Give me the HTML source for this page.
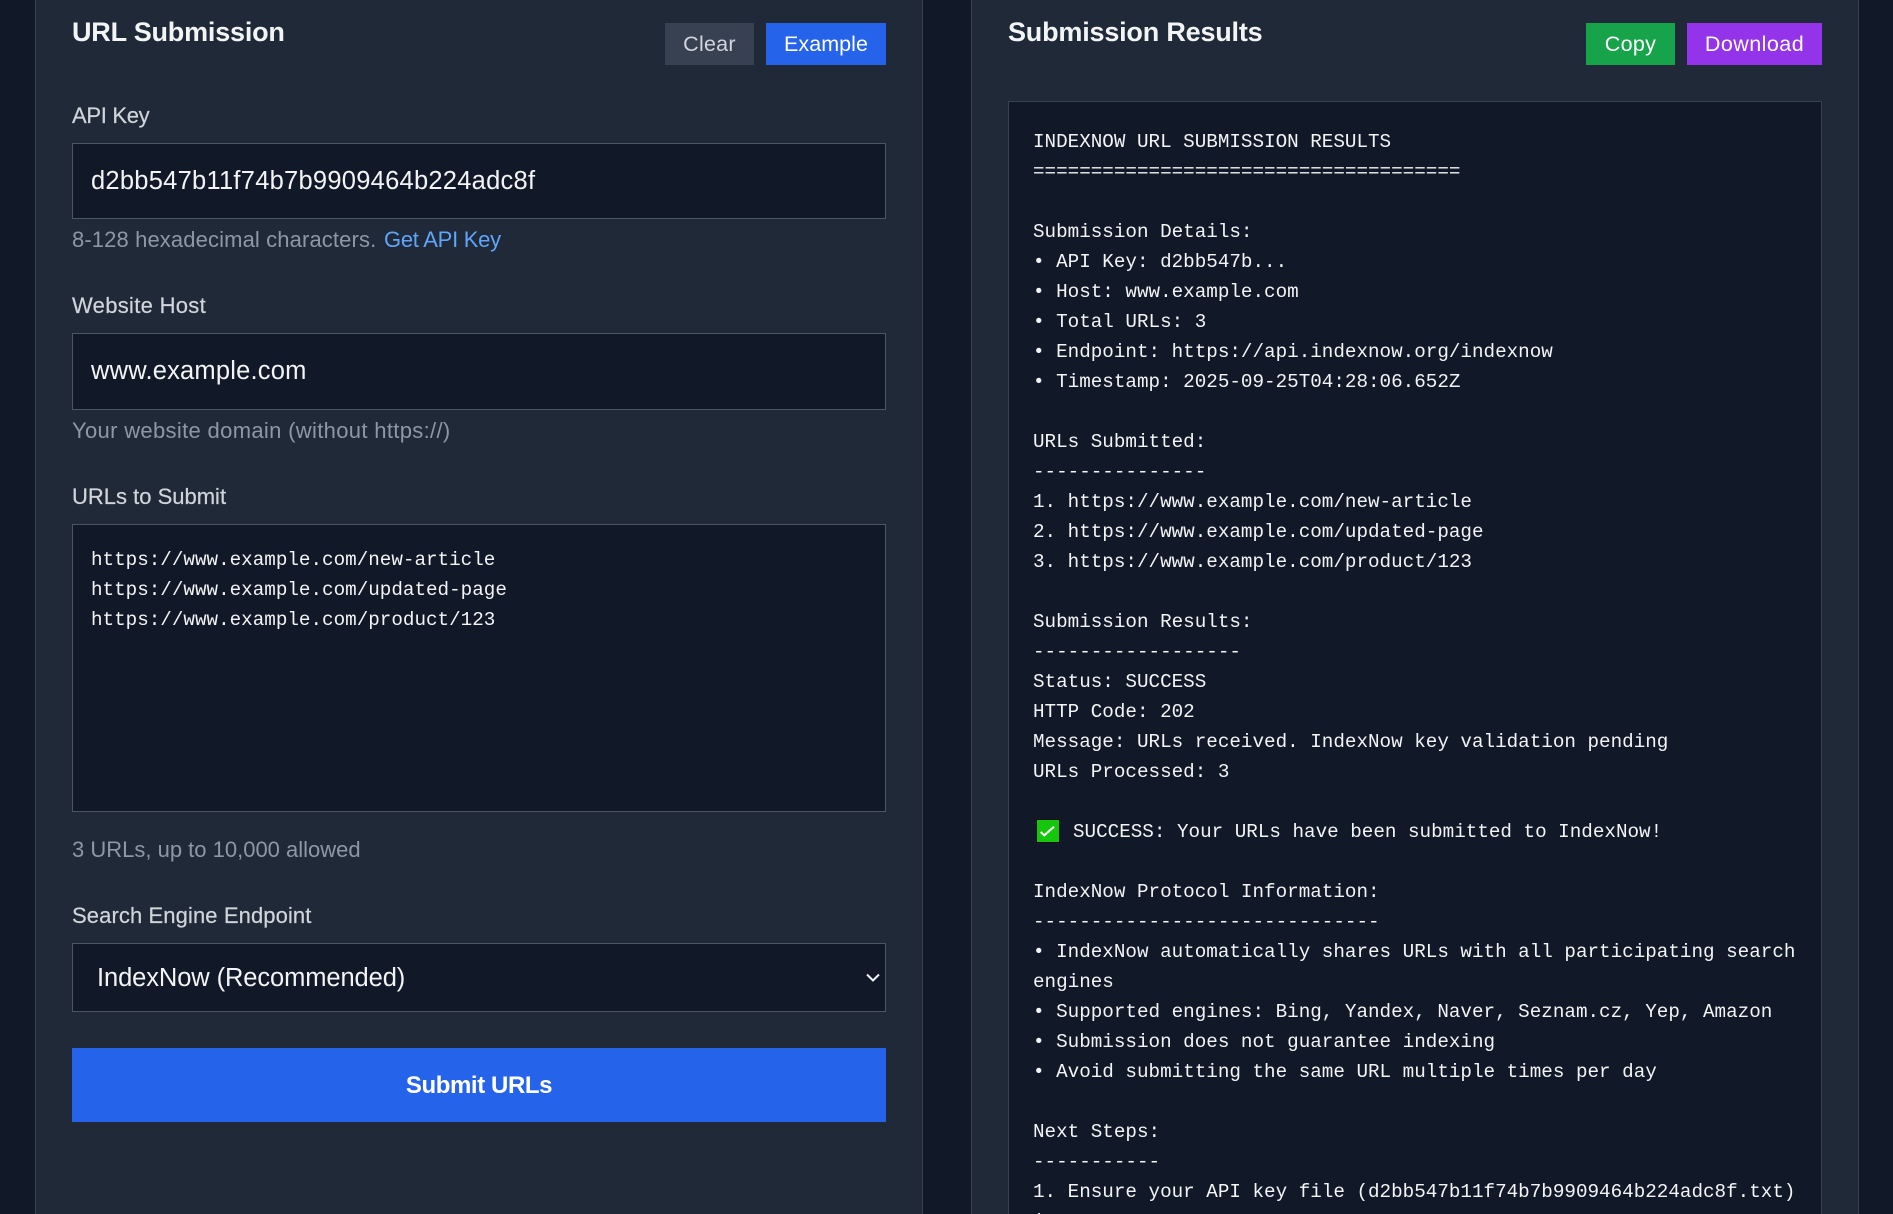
<!DOCTYPE html>
<html lang="en"><head><meta charset="utf-8"><title>IndexNow URL Submission</title>
<style>
html,body{margin:0;padding:0;width:1893px;height:1214px;overflow:hidden;background:#111827}
body{position:relative;font-family:"Liberation Sans",sans-serif;color:#f3f4f6}
.p{position:absolute;background:#1f2937;border:solid #374151;border-width:0 1px;top:0;height:1214px;box-sizing:border-box}
.t,.b,.box{position:absolute;box-sizing:border-box}
.t{white-space:pre;line-height:30px;height:30px}
.h{font-size:27px;font-weight:bold;color:#f3f4f6;letter-spacing:-.2px}
.l{font-size:22px;color:#d1d5db;-webkit-text-stroke:.2px #d1d5db}
.s{font-size:22px;color:#8d97a5}
.v{font-size:25.5px;color:#f3f4f6}
a{color:#60a5fa;text-decoration:none}
.b{display:flex;align-items:center;justify-content:center;font-size:21.5px;color:#fff;padding-top:1px}
.box{background:#111827;border:1px solid #4b5563}
pre{position:absolute;margin:0;font:19.25px/30px "Liberation Mono",monospace;color:#f3f4f6;white-space:pre}
</style></head><body>
<div class="p" style="left:35px;width:888px"></div>
<div class="p" style="left:971px;width:888px"></div>

<div class="t h" style="left:72px;top:17px">URL Submission</div>
<div class="b" style="left:665px;top:23px;width:89px;height:42px;background:#374151;color:#d1d5db;letter-spacing:.25px">Clear</div>
<div class="b" style="left:766px;top:23px;width:120px;height:42px;background:#2563eb;letter-spacing:.05px">Example</div>

<div class="t l" style="left:72px;top:101px;letter-spacing:-.3px">API Key</div>
<div class="box" style="left:72px;top:143px;width:814px;height:76px"></div>
<div class="t v" style="left:91px;top:166px;letter-spacing:.25px">d2bb547b11f74b7b9909464b224adc8f</div>
<div class="t s" style="left:72px;top:225px;letter-spacing:.12px">8-128 hexadecimal characters.</div>
<div class="t s" style="left:384px;top:225px;letter-spacing:-.27px"><a>Get API Key</a></div>

<div class="t l" style="left:72px;top:291px;letter-spacing:.3px">Website Host</div>
<div class="box" style="left:72px;top:333px;width:814px;height:77px"></div>
<div class="t v" style="left:91px;top:356px;letter-spacing:.2px">www.example.com</div>
<div class="t s" style="left:72px;top:416px;letter-spacing:.33px">Your website domain (without https://)</div>

<div class="t l" style="left:72px;top:482px">URLs to Submit</div>
<div class="box" style="left:72px;top:524px;width:814px;height:288px"></div>
<pre style="left:91px;top:545px">https://www.example.com/new-article
https://www.example.com/updated-page
https://www.example.com/product/123</pre>
<div class="t s" style="left:72px;top:835px">3 URLs, up to 10,000 allowed</div>

<div class="t l" style="left:72px;top:901px;letter-spacing:.1px">Search Engine Endpoint</div>
<div class="box" style="left:72px;top:943px;width:814px;height:69px"></div>
<div class="t v" style="left:97px;top:963px;letter-spacing:-.1px">IndexNow (Recommended)</div>
<svg style="position:absolute;left:864px;top:970px" width="18" height="16" viewBox="0 0 18 16"><path d="M3 4.5 9 10.5 15 4.5" fill="none" stroke="#f3f4f6" stroke-width="2"/></svg>

<div class="b" style="left:72px;top:1048px;width:814px;height:74px;background:#2563eb;font-size:24px;font-weight:bold;letter-spacing:-.4px">Submit URLs</div>

<div class="t h" style="left:1008px;top:17px">Submission Results</div>
<div class="b" style="left:1586px;top:23px;width:89px;height:42px;background:#16a34a;letter-spacing:.3px">Copy</div>
<div class="b" style="left:1687px;top:23px;width:135px;height:42px;background:#9333ea;letter-spacing:.45px">Download</div>

<div class="box" style="left:1008px;top:101px;width:814px;height:1130px;border-color:#374151"></div>
<pre style="left:1033px;top:127px">INDEXNOW URL SUBMISSION RESULTS
=====================================

Submission Details:
• API Key: d2bb547b...
• Host: www.example.com
• Total URLs: 3
• Endpoint: https://api.indexnow.org/indexnow
• Timestamp: 2025-09-25T04:28:06.652Z

URLs Submitted:
---------------
1. https://www.example.com/new-article
2. https://www.example.com/updated-page
3. https://www.example.com/product/123

Submission Results:
------------------
Status: SUCCESS
HTTP Code: 202
Message: URLs received. IndexNow key validation pending
URLs Processed: 3

<span style="margin-left:40px">SUCCESS: Your URLs have been submitted to IndexNow!</span>

IndexNow Protocol Information:
------------------------------
• IndexNow automatically shares URLs with all participating search
engines
• Supported engines: Bing, Yandex, Naver, Seznam.cz, Yep, Amazon
• Submission does not guarantee indexing
• Avoid submitting the same URL multiple times per day

Next Steps:
-----------
1. Ensure your API key file (d2bb547b11f74b7b9909464b224adc8f.txt)
is on your server</pre>
<svg style="position:absolute;left:1036px;top:819px" width="24" height="24" viewBox="0 0 24 24"><rect x=".5" y=".5" width="23" height="23" fill="#16c60c" stroke="#0b0f0c"/><path d="M4.7 13 8.3 16.3 18 7.7" fill="none" stroke="#fff" stroke-width="2"/></svg>
</body></html>
